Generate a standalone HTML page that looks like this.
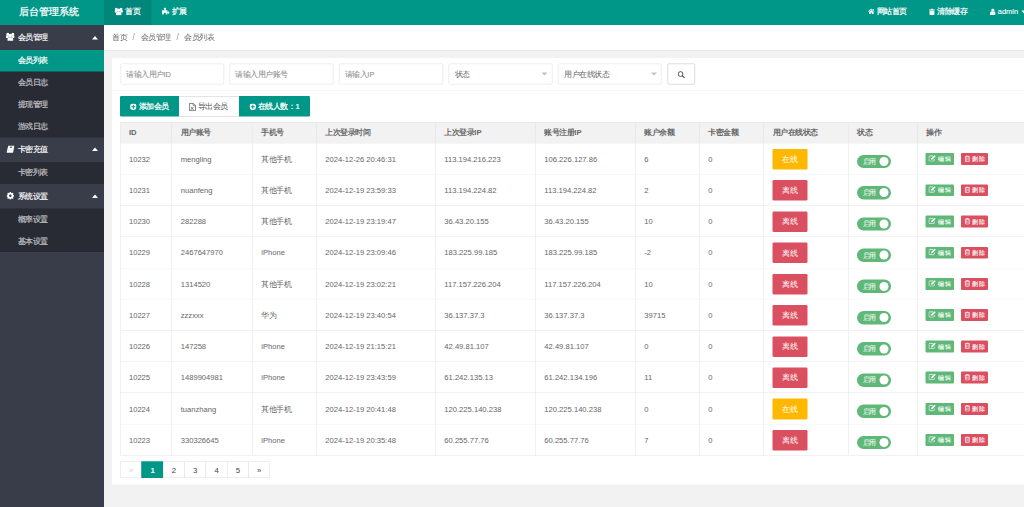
<!DOCTYPE html><html><head><meta charset="utf-8"><title>后台管理系统</title><style>
*{box-sizing:border-box;margin:0;padding:0}
html,body{width:1024px;height:507px;overflow:hidden;background:#f2f2f2}
#root{position:absolute;left:0;top:0;width:2048px;height:1014px;transform:scale(.5);transform-origin:0 0;font-family:"Liberation Sans",sans-serif;font-size:15px;color:#666;overflow:hidden}
.abs{position:absolute}
.ic{display:inline-block;vertical-align:middle;flex:none}
.hd{left:0;top:0;width:2048px;height:50px;background:#009688}
.logo{left:-6.300px;top:.2px;width:208px;height:50px;color:#fff;font-size:19.8px;line-height:44px;text-align:center;white-space:nowrap;-webkit-text-stroke:.5px #fff}
.nav{top:0;height:50px;color:#fff;font-size:15.4px;line-height:46px;white-space:nowrap;display:flex;align-items:center}
.nav span{display:inline-block;line-height:46px;height:50px}
.side{left:0;top:50px;width:208px;height:964px;background:#393D49}
.grp{left:0;width:208px;height:49.8px;color:#fff;font-size:15.2px;line-height:49px;white-space:nowrap}
.sub{left:0;width:208px;height:44.3px;background:#282B33;color:rgba(255,255,255,.7);font-size:15.2px;line-height:42.5px;padding-left:35.4px;white-space:nowrap}
.sub.on{background:#009688;color:#fff}
.caret{position:absolute;left:184.200px;top:21.600px;width:0;height:0;border-left:6.600px solid transparent;border-right:6.600px solid transparent;border-bottom:7.600px solid #fff}
.bc{left:208px;top:50px;width:1840px;height:51.600px;background:#fff;border-bottom:2px solid #e8e8e8;font-size:15.2px;color:#666;line-height:48.400px;white-space:nowrap}
.card{left:223.800px;top:115.600px;width:1900px;height:853.400px;background:#fff;border-radius:3px}
.inp{top:126.500px;height:42px;width:207.600px;border:1px solid #dcdcdc;border-radius:3px;background:#fff;font-size:14.6px;line-height:39px;padding-left:12px;color:#999;white-space:nowrap}
.inp.sel{color:#666}
.inp.sel:after{content:"";position:absolute;right:8.400px;top:17.500px;border-left:6px solid transparent;border-right:6px solid transparent;border-top:6.500px solid #c2c2c2}
.btn{background:#009688}
.th,.td{position:absolute;border-right:1px solid #e2e2e2;border-bottom:1px solid #e2e2e2;padding-left:17px;white-space:nowrap;overflow:hidden}
.th{background:#f2f2f2;font-weight:bold;color:#666;font-size:14.8px;line-height:40px;height:42.500px;border-top:1px solid #e2e2e2}
.td{background:#fff;font-size:15px;line-height:61px;height:62.450px;color:#666}
.st{width:70.200px;height:41.200px;border-radius:2.500px}
.sw{width:68px;height:26.800px;border-radius:14px;background:#5FB878}
.sw:after{content:"";position:absolute;right:5.400px;top:4.400px;width:18px;height:18px;border-radius:50%;background:#fff}
.xb{height:23.800px;border-radius:2.200px}
.pg{position:absolute;top:923px;height:33px;width:43.660px;border:1px solid #dedede;background:#fff;color:#444;font-size:15.6px;line-height:31px;text-align:center;margin-left:0}
</style></head><body><div id="root">
<div class="abs hd"></div>
<div class="abs logo">后台管理系统</div>
<div class="abs" style="left:208px;top:0;width:95px;height:50px;background:rgba(0,0,0,.1)"></div>
<span class="abs" style="left:229.4px;top:15px;line-height:0;display:block"><svg class="ic" width="16.8" height="15.6" viewBox="0 0 17 16" ><g fill="#fff"><circle cx="3.5" cy="3" r="2.700"/><circle cx="13.500" cy="3" r="2.700"/><circle cx="8.500" cy="5.400" r="3.500"/><path d="M0 10V7.800c0-1.500 1-2.500 2.500-2.500h3v4.200c-.9.200-1.600.5-2.200 1H.8C.3 10.500 0 10.300 0 10z"/><path d="M17 10V7.800c0-1.500-1-2.500-2.500-2.500h-3v4.200c.9.200 1.600.5 2.200 1h2.500c.5 0 .8-.2.800-.5z"/><path d="M2.800 14.200c0-3.300 1.500-5.400 3.800-5.400h3.800c2.300 0 3.800 2.100 3.800 5.400 0 1.100-.8 1.800-1.900 1.800H4.700c-1.100 0-1.900-.7-1.900-1.800z"/></g></svg></span>
<span class="abs" style="left:250.8px;top:11.00px;height:24px;line-height:24px;font-size:15.3px;color:#fff;white-space:nowrap;-webkit-text-stroke:0.45px #fff;">首页</span>
<span class="abs" style="left:323.8px;top:15px;line-height:0;display:block"><svg class="ic" width="15.6" height="14.4" viewBox="0 0 16 15" ><g fill="#fff"><circle cx="6" cy="2.400" r="2.400"/><rect x="4.800" y="3" width="2.400" height="3"/><path d="M0 5.500h11.200V15H8v-2.200c0-1.200-.9-2-2.200-2s-2.200.8-2.200 2V15H0z"/><rect x="11" y="9.300" width="3" height="2.400"/><circle cx="13.600" cy="10.500" r="2.300"/></g></svg></span>
<span class="abs" style="left:343.2px;top:11.00px;height:24px;line-height:24px;font-size:15.3px;color:#fff;white-space:nowrap;-webkit-text-stroke:0.45px #fff;">扩展</span>
<span class="abs" style="left:1735.8px;top:17.4px;line-height:0;display:block"><svg class="ic" width="13.2" height="11" viewBox="0 0 16 13" ><g fill="#fff"><path d="M8 0l8 6.800-1 1.200L8 2.200 1 8 0 6.800z"/><path d="M8 3.400l5.600 4.700V13H9.200V9.800H6.800V13H2.400V8.100z"/><path d="M11.600.8h2.200v3.400l-2.200-1.900z"/></g></svg></span>
<span class="abs" style="left:1753.8px;top:11.00px;height:24px;line-height:24px;font-size:15.3px;color:#fff;white-space:nowrap;-webkit-text-stroke:0.45px #fff;">网站首页</span>
<span class="abs" style="left:1858.4px;top:16.6px;line-height:0;display:block"><svg class="ic" width="11.8" height="13.2" viewBox="0 0 12 13.500" ><g fill="#fff"><path d="M0 1.800h3.600L4.400 0h3.200l.8 1.800H12v1.700H0z"/><path d="M1 4.300h10v7.800c0 .8-.6 1.400-1.400 1.400H2.400c-.8 0-1.400-.6-1.400-1.400z"/></g></svg></span>
<span class="abs" style="left:1874.8px;top:11.00px;height:24px;line-height:24px;font-size:15.3px;color:#fff;white-space:nowrap;-webkit-text-stroke:0.45px #fff;">清除缓存</span>
<span class="abs" style="left:1979.8px;top:16.6px;line-height:0;display:block"><svg class="ic" width="11.4" height="13" viewBox="0 0 12 13.600" ><g fill="#fff"><circle cx="6" cy="3.300" r="3.300"/><path d="M0 11.400c0-3.400 1.500-5.400 3.600-5.400.7.500 1.500.8 2.400.8s1.700-.3 2.400-.8c2.100 0 3.600 2 3.600 5.400 0 1.300-.8 2.200-2.200 2.200H2.200C.8 13.600 0 12.700 0 11.400z"/></g></svg></span>
<span class="abs" style="left:1995.5px;top:11.00px;height:24px;line-height:24px;font-size:14.95px;color:#fff;white-space:nowrap;-webkit-text-stroke:0.2px #fff;">admin</span>
<i class="abs" style="left:2043.400px;top:21.200px;border-left:5px solid transparent;border-right:5px solid transparent;border-top:6px solid #fff"></i>
<div class="abs side"></div>
<div class="abs grp" style="top:50.0px"><i class="caret"></i></div>
<span class="abs" style="left:11.8px;top:65.4px;line-height:0;display:block"><svg class="ic" width="17.4" height="17" viewBox="0 0 17 16" ><g fill="#fff"><circle cx="3.5" cy="3" r="2.700"/><circle cx="13.500" cy="3" r="2.700"/><circle cx="8.500" cy="5.400" r="3.500"/><path d="M0 10V7.800c0-1.500 1-2.500 2.500-2.500h3v4.200c-.9.200-1.600.5-2.200 1H.8C.3 10.500 0 10.300 0 10z"/><path d="M17 10V7.800c0-1.500-1-2.500-2.500-2.500h-3v4.200c.9.200 1.600.5 2.200 1h2.500c.5 0 .8-.2.800-.5z"/><path d="M2.800 14.200c0-3.300 1.500-5.400 3.800-5.400h3.800c2.300 0 3.800 2.100 3.800 5.400 0 1.100-.8 1.800-1.900 1.800H4.700c-1.100 0-1.900-.7-1.900-1.800z"/></g></svg></span>
<span class="abs" style="left:35.4px;top:63.00px;height:24px;line-height:24px;font-size:15.3px;color:#fff;white-space:nowrap;-webkit-text-stroke:0.3px #fff;">会员管理</span>
<div class="abs sub on" style="top:99.8px"></div>
<span class="abs" style="left:35.3px;top:109.40px;height:24px;line-height:24px;font-size:15.3px;color:#fff;white-space:nowrap;-webkit-text-stroke:0.4px #fff;">会员列表</span>
<div class="abs sub" style="top:143.3px"></div>
<span class="abs" style="left:35.3px;top:152.90px;height:24px;line-height:24px;font-size:15.3px;color:#bfbfc2;white-space:nowrap;-webkit-text-stroke:0.4px #bfbfc2;">会员日志</span>
<div class="abs sub" style="top:186.8px"></div>
<span class="abs" style="left:35.3px;top:196.40px;height:24px;line-height:24px;font-size:15.3px;color:#bfbfc2;white-space:nowrap;-webkit-text-stroke:0.4px #bfbfc2;">提现管理</span>
<div class="abs sub" style="top:230.3px"></div>
<span class="abs" style="left:35.3px;top:239.90px;height:24px;line-height:24px;font-size:15.3px;color:#bfbfc2;white-space:nowrap;-webkit-text-stroke:0.4px #bfbfc2;">游戏日志</span>
<div class="abs grp" style="top:273.8px"><i class="caret"></i></div>
<span class="abs" style="left:12.8px;top:291.2px;line-height:0;display:block"><svg class="ic" width="16" height="14.6" viewBox="0 0 16 14.600" ><path d="M3.600 0H16l-3 14.600H0z" fill="#fff"/><path d="M7 2h4.800l-.7 3.200H6.300z" fill="#7b8090"/><path d="M1.700 9.400h12.300" stroke="#c9ccd4" stroke-width=".9"/></svg></span>
<span class="abs" style="left:35.4px;top:286.80px;height:24px;line-height:24px;font-size:15.3px;color:#fff;white-space:nowrap;-webkit-text-stroke:0.3px #fff;">卡密充值</span>
<div class="abs sub" style="top:323.6px"></div>
<span class="abs" style="left:35.3px;top:333.20px;height:24px;line-height:24px;font-size:15.3px;color:#bfbfc2;white-space:nowrap;-webkit-text-stroke:0.4px #bfbfc2;">卡密列表</span>
<div class="abs grp" style="top:367.1px"><i class="caret"></i></div>
<span class="abs" style="left:13.2px;top:383.8px;line-height:0;display:block"><svg class="ic" width="15.4" height="15.4" viewBox="0 0 16 16" ><g fill="#fff"><rect x="6.500" y="0" width="3" height="16" rx=".6" transform="rotate(0 8 8)"/><rect x="6.500" y="0" width="3" height="16" rx=".6" transform="rotate(45 8 8)"/><rect x="6.500" y="0" width="3" height="16" rx=".6" transform="rotate(90 8 8)"/><rect x="6.500" y="0" width="3" height="16" rx=".6" transform="rotate(135 8 8)"/><circle cx="8" cy="8" r="6.200"/></g><circle cx="8" cy="8" r="2.600" fill="#393D49"/></svg></span>
<span class="abs" style="left:35.4px;top:380.10px;height:24px;line-height:24px;font-size:15.3px;color:#fff;white-space:nowrap;-webkit-text-stroke:0.3px #fff;">系统设置</span>
<div class="abs sub" style="top:416.9px"></div>
<span class="abs" style="left:35.3px;top:426.50px;height:24px;line-height:24px;font-size:15.3px;color:#bfbfc2;white-space:nowrap;-webkit-text-stroke:0.4px #bfbfc2;">概率设置</span>
<div class="abs sub" style="top:460.4px"></div>
<span class="abs" style="left:35.3px;top:470.00px;height:24px;line-height:24px;font-size:15.3px;color:#bfbfc2;white-space:nowrap;-webkit-text-stroke:0.4px #bfbfc2;">基本设置</span>
<div class="abs" style="left:0;top:503.9px;width:208px;height:20px;background:#393D49"></div>
<div class="abs bc"></div>
<span class="abs" style="left:224.4px;top:62.40px;height:24px;line-height:24px;font-size:15.2px;color:#666;white-space:nowrap;">首页</span>
<span class="abs" style="left:265px;top:61.80px;height:24px;line-height:24px;font-size:17px;color:#999;white-space:nowrap;">/</span>
<span class="abs" style="left:281.4px;top:62.40px;height:24px;line-height:24px;font-size:15.2px;color:#666;white-space:nowrap;">会员管理</span>
<span class="abs" style="left:353px;top:61.80px;height:24px;line-height:24px;font-size:17px;color:#999;white-space:nowrap;">/</span>
<span class="abs" style="left:368.6px;top:62.40px;height:24px;line-height:24px;font-size:15.2px;color:#666;white-space:nowrap;">会员列表</span>
<div class="abs card"></div>
<div class="abs inp" style="left:240.6px"></div>
<span class="abs" style="left:252.0px;top:136.10px;height:24px;line-height:24px;font-size:15.2px;color:#858585;white-space:nowrap;">请输入用户ID</span>
<div class="abs inp" style="left:459.4px"></div>
<span class="abs" style="left:470.79999999999995px;top:136.10px;height:24px;line-height:24px;font-size:15.2px;color:#858585;white-space:nowrap;">请输入用户账号</span>
<div class="abs inp" style="left:678.2px"></div>
<span class="abs" style="left:689.6px;top:136.10px;height:24px;line-height:24px;font-size:15.2px;color:#858585;white-space:nowrap;">请输入IP</span>
<div class="abs inp sel" style="left:897px"></div>
<span class="abs" style="left:909.2px;top:136.10px;height:24px;line-height:24px;font-size:15.2px;color:#666;white-space:nowrap;">状态</span>
<div class="abs inp sel" style="left:1115.8px"></div>
<span class="abs" style="left:1128.0px;top:136.10px;height:24px;line-height:24px;font-size:15.2px;color:#666;white-space:nowrap;">用户在线状态</span>
<div class="abs" style="left:1334.500px;top:126.500px;width:55.900px;height:42px;border:1px solid #bdbdbd;border-radius:2.500px;background:#fff"></div>
<span class="abs" style="left:1355.2px;top:141.8px;line-height:0;display:block"><svg class="ic" width="15.2" height="14.6" viewBox="0 0 16 15.400" ><circle cx="6.400" cy="6.400" r="5.100" fill="none" stroke="#444" stroke-width="1.900"/><path d="M10.400 10.400l4.300 4" stroke="#444" stroke-width="2.300" stroke-linecap="round"/></svg></span>
<div class="abs" style="left:223.800px;top:180px;width:1900px;height:1px;background:#eee"></div>
<div class="abs btn" style="left:240.200px;top:191.8px;height:41.2px;width:118px;border-radius:2.500px 0 0 2.500px"></div>
<span class="abs" style="left:260px;top:206.6px;line-height:0;display:block"><svg class="ic" width="13.2" height="13.2" viewBox="0 0 14 14" ><circle cx="7" cy="7" r="7" fill="#fff"/><path d="M5.900 2.800h2.200v3.100h3.100v2.200H8.100v3.100H5.900V8.100H2.800V5.900h3.100z" fill="#009688"/></svg></span>
<span class="abs" style="left:277.5px;top:201.30px;height:24px;line-height:24px;font-size:15.4px;color:#fff;white-space:nowrap;-webkit-text-stroke:0.45px #fff;">添加会员</span>
<div class="abs btn" style="left:358.200px;top:191.8px;height:41.2px;width:120.200px;background:#fff;border-top:1px solid #c9c9c9;border-bottom:1px solid #c9c9c9"></div>
<span class="abs" style="left:378.2px;top:205.5px;line-height:0;display:block"><svg class="ic" width="13.8" height="16.2" viewBox="0 0 12 14" ><path d="M.7.700h6.600l4 4v8.600H.7z" fill="none" stroke="#555" stroke-width="1.300"/><path d="M7.300.7v4h4" fill="none" stroke="#555" stroke-width="1.100"/><path d="M3.400 6.800l4.200 5M7.600 6.800l-4.200 5" stroke="#555" stroke-width="1.300"/></svg></span>
<span class="abs" style="left:395.8px;top:201.30px;height:24px;line-height:24px;font-size:15.4px;color:#555;white-space:nowrap;">导出会员</span>
<div class="abs btn" style="left:478.400px;top:191.8px;height:41.2px;width:141.400px;border-radius:0 2.500px 2.500px 0"></div>
<span class="abs" style="left:498.6px;top:206.6px;line-height:0;display:block"><svg class="ic" width="13.2" height="13.2" viewBox="0 0 14 14" ><circle cx="7" cy="7" r="7" fill="#fff"/><path d="M5.900 2.800h2.200v3.100h3.100v2.200H8.100v3.100H5.900V8.100H2.800V5.900h3.100z" fill="#009688"/></svg></span>
<span class="abs" style="left:515.8px;top:201.30px;height:24px;line-height:24px;font-size:15.4px;color:#fff;white-space:nowrap;-webkit-text-stroke:0.45px #fff;">在线人数：1</span>
<div class="th" style="left:240.7px;top:244.3px;width:103.6px;border-left:1px solid #e2e2e2;"></div>
<span class="abs" style="left:257.9px;top:253.10px;height:24px;line-height:24px;font-size:15.3px;color:#666;white-space:nowrap;font-weight:bold;">ID</span>
<div class="th" style="left:344.3px;top:244.3px;width:161.2px;"></div>
<span class="abs" style="left:361.5px;top:253.10px;height:24px;line-height:24px;font-size:15.3px;color:#666;white-space:nowrap;font-weight:bold;">用户账号</span>
<div class="th" style="left:505.5px;top:244.3px;width:128.0px;"></div>
<span class="abs" style="left:522.7px;top:253.10px;height:24px;line-height:24px;font-size:15.3px;color:#666;white-space:nowrap;font-weight:bold;">手机号</span>
<div class="th" style="left:633.5px;top:244.3px;width:238.0px;"></div>
<span class="abs" style="left:650.7px;top:253.10px;height:24px;line-height:24px;font-size:15.3px;color:#666;white-space:nowrap;font-weight:bold;">上次登录时间</span>
<div class="th" style="left:871.5px;top:244.3px;width:200.0px;"></div>
<span class="abs" style="left:888.7px;top:253.10px;height:24px;line-height:24px;font-size:15.3px;color:#666;white-space:nowrap;font-weight:bold;">上次登录IP</span>
<div class="th" style="left:1071.5px;top:244.3px;width:200.0px;"></div>
<span class="abs" style="left:1088.7px;top:253.10px;height:24px;line-height:24px;font-size:15.3px;color:#666;white-space:nowrap;font-weight:bold;">账号注册IP</span>
<div class="th" style="left:1271.5px;top:244.3px;width:128.0px;"></div>
<span class="abs" style="left:1288.7px;top:253.10px;height:24px;line-height:24px;font-size:15.3px;color:#666;white-space:nowrap;font-weight:bold;">账户余额</span>
<div class="th" style="left:1399.5px;top:244.3px;width:128.6px;"></div>
<span class="abs" style="left:1416.7px;top:253.10px;height:24px;line-height:24px;font-size:15.3px;color:#666;white-space:nowrap;font-weight:bold;">卡密金额</span>
<div class="th" style="left:1528.1px;top:244.3px;width:169.4px;"></div>
<span class="abs" style="left:1545.3px;top:253.10px;height:24px;line-height:24px;font-size:15.3px;color:#666;white-space:nowrap;font-weight:bold;">用户在线状态</span>
<div class="th" style="left:1697.5px;top:244.3px;width:138.0px;"></div>
<span class="abs" style="left:1714.7px;top:253.10px;height:24px;line-height:24px;font-size:15.3px;color:#666;white-space:nowrap;font-weight:bold;">状态</span>
<div class="th" style="left:1835.5px;top:244.3px;width:264.5px;"></div>
<span class="abs" style="left:1852.7px;top:253.10px;height:24px;line-height:24px;font-size:15.3px;color:#666;white-space:nowrap;font-weight:bold;">操作</span>
<div class="td" style="left:240.7px;top:286.80px;width:103.6px;border-left:1px solid #e2e2e2;"></div>
<span class="abs" style="left:257.9px;top:306.00px;height:24px;line-height:24px;font-size:15.2px;color:#666;white-space:nowrap;">10232</span>
<div class="td" style="left:344.3px;top:286.80px;width:161.2px;"></div>
<span class="abs" style="left:361.5px;top:306.00px;height:24px;line-height:24px;font-size:15.2px;color:#666;white-space:nowrap;">mengling</span>
<div class="td" style="left:505.5px;top:286.80px;width:128.0px;"></div>
<span class="abs" style="left:522.7px;top:306.00px;height:24px;line-height:24px;font-size:15.2px;color:#666;white-space:nowrap;">其他手机</span>
<div class="td" style="left:633.5px;top:286.80px;width:238.0px;"></div>
<span class="abs" style="left:650.7px;top:306.00px;height:24px;line-height:24px;font-size:15.2px;color:#666;white-space:nowrap;">2024-12-26 20:46:31</span>
<div class="td" style="left:871.5px;top:286.80px;width:200.0px;"></div>
<span class="abs" style="left:888.7px;top:306.00px;height:24px;line-height:24px;font-size:15.2px;color:#666;white-space:nowrap;">113.194.216.223</span>
<div class="td" style="left:1071.5px;top:286.80px;width:200.0px;"></div>
<span class="abs" style="left:1088.7px;top:306.00px;height:24px;line-height:24px;font-size:15.2px;color:#666;white-space:nowrap;">106.226.127.86</span>
<div class="td" style="left:1271.5px;top:286.80px;width:128.0px;"></div>
<span class="abs" style="left:1288.7px;top:306.00px;height:24px;line-height:24px;font-size:15.2px;color:#666;white-space:nowrap;">6</span>
<div class="td" style="left:1399.5px;top:286.80px;width:128.6px;"></div>
<span class="abs" style="left:1416.7px;top:306.00px;height:24px;line-height:24px;font-size:15.2px;color:#666;white-space:nowrap;">0</span>
<div class="td" style="left:1528.1px;top:286.80px;width:169.4px;"></div>
<div class="abs st" style="left:1544.5px;top:297.80px;background:#FFB800"></div>
<span class="abs" style="left:1564.5px;top:306.20px;height:24px;line-height:24px;font-size:15.2px;color:#fff;white-space:nowrap;">在线</span>
<div class="td" style="left:1697.5px;top:286.80px;width:138.0px;"></div>
<div class="abs sw" style="left:1714.3px;top:309.60px"></div>
<span class="abs" style="left:1725.7px;top:311.20px;height:24px;line-height:24px;font-size:13px;color:#fff;white-space:nowrap;">启用</span>
<div class="td" style="left:1835.5px;top:286.80px;width:264.5px;"></div>
<div class="abs xb" style="left:1851.0px;top:306.20px;width:57px;background:#5FB878"></div>
<span class="abs" style="left:1856.8px;top:309.8px;line-height:0;display:block"><svg class="ic" width="15.2" height="13.4" viewBox="0 0 15.400 13.600" ><path d="M9.600 1.800H2.600C1.700 1.800.9 2.500.9 3.400v7.600c0 .9.800 1.600 1.700 1.600h7.600c.9 0 1.600-.7 1.600-1.600V8.200" fill="none" stroke="#fff" stroke-width="1.500"/><path d="M5.300 9.500l.5-2.700L12.400.300l2.300 2.300L8.100 9z" fill="#fff"/></svg></span>
<span class="abs" style="left:1876.8px;top:305.80px;height:24px;line-height:24px;font-size:12.9px;color:#fff;white-space:nowrap;-webkit-text-stroke:0.2px #fff;">编辑</span>
<div class="abs xb" style="left:1922.0px;top:306.20px;width:53.600px;background:#DB5060"></div>
<span class="abs" style="left:1929.0px;top:310.59999999999997px;line-height:0;display:block"><svg class="ic" width="11.2" height="13.2" viewBox="0 0 10 13" ><g fill="none" stroke="#fff" stroke-width="1.500"><path d="M0 2.500h10M3.200 2.300V.800h3.600v1.500"/><path d="M1.300 3v8.200c0 .6.400 1 1 1h5.400c.6 0 1-.4 1-1V3"/><path d="M3.700 5v5M6.300 5v5" stroke-width="1.100"/></g></svg></span>
<span class="abs" style="left:1944.0px;top:305.80px;height:24px;line-height:24px;font-size:12.9px;color:#fff;white-space:nowrap;-webkit-text-stroke:0.2px #fff;">删除</span>
<div class="td" style="left:240.7px;top:349.25px;width:103.6px;border-left:1px solid #e2e2e2;"></div>
<span class="abs" style="left:257.9px;top:368.45px;height:24px;line-height:24px;font-size:15.2px;color:#666;white-space:nowrap;">10231</span>
<div class="td" style="left:344.3px;top:349.25px;width:161.2px;"></div>
<span class="abs" style="left:361.5px;top:368.45px;height:24px;line-height:24px;font-size:15.2px;color:#666;white-space:nowrap;">nuanfeng</span>
<div class="td" style="left:505.5px;top:349.25px;width:128.0px;"></div>
<span class="abs" style="left:522.7px;top:368.45px;height:24px;line-height:24px;font-size:15.2px;color:#666;white-space:nowrap;">其他手机</span>
<div class="td" style="left:633.5px;top:349.25px;width:238.0px;"></div>
<span class="abs" style="left:650.7px;top:368.45px;height:24px;line-height:24px;font-size:15.2px;color:#666;white-space:nowrap;">2024-12-19 23:59:33</span>
<div class="td" style="left:871.5px;top:349.25px;width:200.0px;"></div>
<span class="abs" style="left:888.7px;top:368.45px;height:24px;line-height:24px;font-size:15.2px;color:#666;white-space:nowrap;">113.194.224.82</span>
<div class="td" style="left:1071.5px;top:349.25px;width:200.0px;"></div>
<span class="abs" style="left:1088.7px;top:368.45px;height:24px;line-height:24px;font-size:15.2px;color:#666;white-space:nowrap;">113.194.224.82</span>
<div class="td" style="left:1271.5px;top:349.25px;width:128.0px;"></div>
<span class="abs" style="left:1288.7px;top:368.45px;height:24px;line-height:24px;font-size:15.2px;color:#666;white-space:nowrap;">2</span>
<div class="td" style="left:1399.5px;top:349.25px;width:128.6px;"></div>
<span class="abs" style="left:1416.7px;top:368.45px;height:24px;line-height:24px;font-size:15.2px;color:#666;white-space:nowrap;">0</span>
<div class="td" style="left:1528.1px;top:349.25px;width:169.4px;"></div>
<div class="abs st" style="left:1544.5px;top:360.25px;background:#DB5060"></div>
<span class="abs" style="left:1564.5px;top:368.65px;height:24px;line-height:24px;font-size:15.2px;color:#fff;white-space:nowrap;">离线</span>
<div class="td" style="left:1697.5px;top:349.25px;width:138.0px;"></div>
<div class="abs sw" style="left:1714.3px;top:372.05px"></div>
<span class="abs" style="left:1725.7px;top:373.65px;height:24px;line-height:24px;font-size:13px;color:#fff;white-space:nowrap;">启用</span>
<div class="td" style="left:1835.5px;top:349.25px;width:264.5px;"></div>
<div class="abs xb" style="left:1851.0px;top:368.65px;width:57px;background:#5FB878"></div>
<span class="abs" style="left:1856.8px;top:372.25px;line-height:0;display:block"><svg class="ic" width="15.2" height="13.4" viewBox="0 0 15.400 13.600" ><path d="M9.600 1.800H2.600C1.700 1.800.9 2.500.9 3.400v7.600c0 .9.800 1.600 1.700 1.600h7.600c.9 0 1.600-.7 1.600-1.600V8.200" fill="none" stroke="#fff" stroke-width="1.500"/><path d="M5.300 9.500l.5-2.700L12.400.300l2.300 2.300L8.100 9z" fill="#fff"/></svg></span>
<span class="abs" style="left:1876.8px;top:368.25px;height:24px;line-height:24px;font-size:12.9px;color:#fff;white-space:nowrap;-webkit-text-stroke:0.2px #fff;">编辑</span>
<div class="abs xb" style="left:1922.0px;top:368.65px;width:53.600px;background:#DB5060"></div>
<span class="abs" style="left:1929.0px;top:373.04999999999995px;line-height:0;display:block"><svg class="ic" width="11.2" height="13.2" viewBox="0 0 10 13" ><g fill="none" stroke="#fff" stroke-width="1.500"><path d="M0 2.500h10M3.200 2.300V.800h3.600v1.500"/><path d="M1.300 3v8.200c0 .6.400 1 1 1h5.400c.6 0 1-.4 1-1V3"/><path d="M3.700 5v5M6.300 5v5" stroke-width="1.100"/></g></svg></span>
<span class="abs" style="left:1944.0px;top:368.25px;height:24px;line-height:24px;font-size:12.9px;color:#fff;white-space:nowrap;-webkit-text-stroke:0.2px #fff;">删除</span>
<div class="td" style="left:240.7px;top:411.70px;width:103.6px;border-left:1px solid #e2e2e2;"></div>
<span class="abs" style="left:257.9px;top:430.90px;height:24px;line-height:24px;font-size:15.2px;color:#666;white-space:nowrap;">10230</span>
<div class="td" style="left:344.3px;top:411.70px;width:161.2px;"></div>
<span class="abs" style="left:361.5px;top:430.90px;height:24px;line-height:24px;font-size:15.2px;color:#666;white-space:nowrap;">282288</span>
<div class="td" style="left:505.5px;top:411.70px;width:128.0px;"></div>
<span class="abs" style="left:522.7px;top:430.90px;height:24px;line-height:24px;font-size:15.2px;color:#666;white-space:nowrap;">其他手机</span>
<div class="td" style="left:633.5px;top:411.70px;width:238.0px;"></div>
<span class="abs" style="left:650.7px;top:430.90px;height:24px;line-height:24px;font-size:15.2px;color:#666;white-space:nowrap;">2024-12-19 23:19:47</span>
<div class="td" style="left:871.5px;top:411.70px;width:200.0px;"></div>
<span class="abs" style="left:888.7px;top:430.90px;height:24px;line-height:24px;font-size:15.2px;color:#666;white-space:nowrap;">36.43.20.155</span>
<div class="td" style="left:1071.5px;top:411.70px;width:200.0px;"></div>
<span class="abs" style="left:1088.7px;top:430.90px;height:24px;line-height:24px;font-size:15.2px;color:#666;white-space:nowrap;">36.43.20.155</span>
<div class="td" style="left:1271.5px;top:411.70px;width:128.0px;"></div>
<span class="abs" style="left:1288.7px;top:430.90px;height:24px;line-height:24px;font-size:15.2px;color:#666;white-space:nowrap;">10</span>
<div class="td" style="left:1399.5px;top:411.70px;width:128.6px;"></div>
<span class="abs" style="left:1416.7px;top:430.90px;height:24px;line-height:24px;font-size:15.2px;color:#666;white-space:nowrap;">0</span>
<div class="td" style="left:1528.1px;top:411.70px;width:169.4px;"></div>
<div class="abs st" style="left:1544.5px;top:422.70px;background:#DB5060"></div>
<span class="abs" style="left:1564.5px;top:431.10px;height:24px;line-height:24px;font-size:15.2px;color:#fff;white-space:nowrap;">离线</span>
<div class="td" style="left:1697.5px;top:411.70px;width:138.0px;"></div>
<div class="abs sw" style="left:1714.3px;top:434.50px"></div>
<span class="abs" style="left:1725.7px;top:436.10px;height:24px;line-height:24px;font-size:13px;color:#fff;white-space:nowrap;">启用</span>
<div class="td" style="left:1835.5px;top:411.70px;width:264.5px;"></div>
<div class="abs xb" style="left:1851.0px;top:431.10px;width:57px;background:#5FB878"></div>
<span class="abs" style="left:1856.8px;top:434.70000000000005px;line-height:0;display:block"><svg class="ic" width="15.2" height="13.4" viewBox="0 0 15.400 13.600" ><path d="M9.600 1.800H2.600C1.700 1.800.9 2.500.9 3.400v7.600c0 .9.800 1.600 1.700 1.600h7.600c.9 0 1.600-.7 1.600-1.600V8.200" fill="none" stroke="#fff" stroke-width="1.500"/><path d="M5.300 9.500l.5-2.700L12.400.300l2.300 2.300L8.100 9z" fill="#fff"/></svg></span>
<span class="abs" style="left:1876.8px;top:430.70px;height:24px;line-height:24px;font-size:12.9px;color:#fff;white-space:nowrap;-webkit-text-stroke:0.2px #fff;">编辑</span>
<div class="abs xb" style="left:1922.0px;top:431.10px;width:53.600px;background:#DB5060"></div>
<span class="abs" style="left:1929.0px;top:435.5px;line-height:0;display:block"><svg class="ic" width="11.2" height="13.2" viewBox="0 0 10 13" ><g fill="none" stroke="#fff" stroke-width="1.500"><path d="M0 2.500h10M3.200 2.300V.800h3.600v1.500"/><path d="M1.300 3v8.200c0 .6.400 1 1 1h5.400c.6 0 1-.4 1-1V3"/><path d="M3.700 5v5M6.300 5v5" stroke-width="1.100"/></g></svg></span>
<span class="abs" style="left:1944.0px;top:430.70px;height:24px;line-height:24px;font-size:12.9px;color:#fff;white-space:nowrap;-webkit-text-stroke:0.2px #fff;">删除</span>
<div class="td" style="left:240.7px;top:474.15px;width:103.6px;border-left:1px solid #e2e2e2;"></div>
<span class="abs" style="left:257.9px;top:493.35px;height:24px;line-height:24px;font-size:15.2px;color:#666;white-space:nowrap;">10229</span>
<div class="td" style="left:344.3px;top:474.15px;width:161.2px;"></div>
<span class="abs" style="left:361.5px;top:493.35px;height:24px;line-height:24px;font-size:15.2px;color:#666;white-space:nowrap;">2467647970</span>
<div class="td" style="left:505.5px;top:474.15px;width:128.0px;"></div>
<span class="abs" style="left:522.7px;top:493.35px;height:24px;line-height:24px;font-size:15.2px;color:#666;white-space:nowrap;">iPhone</span>
<div class="td" style="left:633.5px;top:474.15px;width:238.0px;"></div>
<span class="abs" style="left:650.7px;top:493.35px;height:24px;line-height:24px;font-size:15.2px;color:#666;white-space:nowrap;">2024-12-19 23:09:46</span>
<div class="td" style="left:871.5px;top:474.15px;width:200.0px;"></div>
<span class="abs" style="left:888.7px;top:493.35px;height:24px;line-height:24px;font-size:15.2px;color:#666;white-space:nowrap;">183.225.99.185</span>
<div class="td" style="left:1071.5px;top:474.15px;width:200.0px;"></div>
<span class="abs" style="left:1088.7px;top:493.35px;height:24px;line-height:24px;font-size:15.2px;color:#666;white-space:nowrap;">183.225.99.185</span>
<div class="td" style="left:1271.5px;top:474.15px;width:128.0px;"></div>
<span class="abs" style="left:1288.7px;top:493.35px;height:24px;line-height:24px;font-size:15.2px;color:#666;white-space:nowrap;">-2</span>
<div class="td" style="left:1399.5px;top:474.15px;width:128.6px;"></div>
<span class="abs" style="left:1416.7px;top:493.35px;height:24px;line-height:24px;font-size:15.2px;color:#666;white-space:nowrap;">0</span>
<div class="td" style="left:1528.1px;top:474.15px;width:169.4px;"></div>
<div class="abs st" style="left:1544.5px;top:485.15px;background:#DB5060"></div>
<span class="abs" style="left:1564.5px;top:493.55px;height:24px;line-height:24px;font-size:15.2px;color:#fff;white-space:nowrap;">离线</span>
<div class="td" style="left:1697.5px;top:474.15px;width:138.0px;"></div>
<div class="abs sw" style="left:1714.3px;top:496.95px"></div>
<span class="abs" style="left:1725.7px;top:498.55px;height:24px;line-height:24px;font-size:13px;color:#fff;white-space:nowrap;">启用</span>
<div class="td" style="left:1835.5px;top:474.15px;width:264.5px;"></div>
<div class="abs xb" style="left:1851.0px;top:493.55px;width:57px;background:#5FB878"></div>
<span class="abs" style="left:1856.8px;top:497.15000000000003px;line-height:0;display:block"><svg class="ic" width="15.2" height="13.4" viewBox="0 0 15.400 13.600" ><path d="M9.600 1.800H2.600C1.700 1.800.9 2.500.9 3.400v7.600c0 .9.800 1.600 1.700 1.600h7.600c.9 0 1.600-.7 1.600-1.600V8.200" fill="none" stroke="#fff" stroke-width="1.500"/><path d="M5.300 9.500l.5-2.700L12.400.300l2.300 2.300L8.100 9z" fill="#fff"/></svg></span>
<span class="abs" style="left:1876.8px;top:493.15px;height:24px;line-height:24px;font-size:12.9px;color:#fff;white-space:nowrap;-webkit-text-stroke:0.2px #fff;">编辑</span>
<div class="abs xb" style="left:1922.0px;top:493.55px;width:53.600px;background:#DB5060"></div>
<span class="abs" style="left:1929.0px;top:497.95px;line-height:0;display:block"><svg class="ic" width="11.2" height="13.2" viewBox="0 0 10 13" ><g fill="none" stroke="#fff" stroke-width="1.500"><path d="M0 2.500h10M3.200 2.300V.800h3.600v1.500"/><path d="M1.300 3v8.200c0 .6.400 1 1 1h5.400c.6 0 1-.4 1-1V3"/><path d="M3.700 5v5M6.300 5v5" stroke-width="1.100"/></g></svg></span>
<span class="abs" style="left:1944.0px;top:493.15px;height:24px;line-height:24px;font-size:12.9px;color:#fff;white-space:nowrap;-webkit-text-stroke:0.2px #fff;">删除</span>
<div class="td" style="left:240.7px;top:536.60px;width:103.6px;border-left:1px solid #e2e2e2;"></div>
<span class="abs" style="left:257.9px;top:555.80px;height:24px;line-height:24px;font-size:15.2px;color:#666;white-space:nowrap;">10228</span>
<div class="td" style="left:344.3px;top:536.60px;width:161.2px;"></div>
<span class="abs" style="left:361.5px;top:555.80px;height:24px;line-height:24px;font-size:15.2px;color:#666;white-space:nowrap;">1314520</span>
<div class="td" style="left:505.5px;top:536.60px;width:128.0px;"></div>
<span class="abs" style="left:522.7px;top:555.80px;height:24px;line-height:24px;font-size:15.2px;color:#666;white-space:nowrap;">其他手机</span>
<div class="td" style="left:633.5px;top:536.60px;width:238.0px;"></div>
<span class="abs" style="left:650.7px;top:555.80px;height:24px;line-height:24px;font-size:15.2px;color:#666;white-space:nowrap;">2024-12-19 23:02:21</span>
<div class="td" style="left:871.5px;top:536.60px;width:200.0px;"></div>
<span class="abs" style="left:888.7px;top:555.80px;height:24px;line-height:24px;font-size:15.2px;color:#666;white-space:nowrap;">117.157.226.204</span>
<div class="td" style="left:1071.5px;top:536.60px;width:200.0px;"></div>
<span class="abs" style="left:1088.7px;top:555.80px;height:24px;line-height:24px;font-size:15.2px;color:#666;white-space:nowrap;">117.157.226.204</span>
<div class="td" style="left:1271.5px;top:536.60px;width:128.0px;"></div>
<span class="abs" style="left:1288.7px;top:555.80px;height:24px;line-height:24px;font-size:15.2px;color:#666;white-space:nowrap;">10</span>
<div class="td" style="left:1399.5px;top:536.60px;width:128.6px;"></div>
<span class="abs" style="left:1416.7px;top:555.80px;height:24px;line-height:24px;font-size:15.2px;color:#666;white-space:nowrap;">0</span>
<div class="td" style="left:1528.1px;top:536.60px;width:169.4px;"></div>
<div class="abs st" style="left:1544.5px;top:547.60px;background:#DB5060"></div>
<span class="abs" style="left:1564.5px;top:556.00px;height:24px;line-height:24px;font-size:15.2px;color:#fff;white-space:nowrap;">离线</span>
<div class="td" style="left:1697.5px;top:536.60px;width:138.0px;"></div>
<div class="abs sw" style="left:1714.3px;top:559.40px"></div>
<span class="abs" style="left:1725.7px;top:561.00px;height:24px;line-height:24px;font-size:13px;color:#fff;white-space:nowrap;">启用</span>
<div class="td" style="left:1835.5px;top:536.60px;width:264.5px;"></div>
<div class="abs xb" style="left:1851.0px;top:556.00px;width:57px;background:#5FB878"></div>
<span class="abs" style="left:1856.8px;top:559.6px;line-height:0;display:block"><svg class="ic" width="15.2" height="13.4" viewBox="0 0 15.400 13.600" ><path d="M9.600 1.800H2.600C1.700 1.800.9 2.500.9 3.400v7.600c0 .9.800 1.600 1.700 1.600h7.600c.9 0 1.600-.7 1.600-1.600V8.200" fill="none" stroke="#fff" stroke-width="1.500"/><path d="M5.300 9.500l.5-2.700L12.400.300l2.300 2.300L8.100 9z" fill="#fff"/></svg></span>
<span class="abs" style="left:1876.8px;top:555.60px;height:24px;line-height:24px;font-size:12.9px;color:#fff;white-space:nowrap;-webkit-text-stroke:0.2px #fff;">编辑</span>
<div class="abs xb" style="left:1922.0px;top:556.00px;width:53.600px;background:#DB5060"></div>
<span class="abs" style="left:1929.0px;top:560.4px;line-height:0;display:block"><svg class="ic" width="11.2" height="13.2" viewBox="0 0 10 13" ><g fill="none" stroke="#fff" stroke-width="1.500"><path d="M0 2.500h10M3.200 2.300V.800h3.600v1.500"/><path d="M1.300 3v8.200c0 .6.400 1 1 1h5.400c.6 0 1-.4 1-1V3"/><path d="M3.700 5v5M6.300 5v5" stroke-width="1.100"/></g></svg></span>
<span class="abs" style="left:1944.0px;top:555.60px;height:24px;line-height:24px;font-size:12.9px;color:#fff;white-space:nowrap;-webkit-text-stroke:0.2px #fff;">删除</span>
<div class="td" style="left:240.7px;top:599.05px;width:103.6px;border-left:1px solid #e2e2e2;"></div>
<span class="abs" style="left:257.9px;top:618.25px;height:24px;line-height:24px;font-size:15.2px;color:#666;white-space:nowrap;">10227</span>
<div class="td" style="left:344.3px;top:599.05px;width:161.2px;"></div>
<span class="abs" style="left:361.5px;top:618.25px;height:24px;line-height:24px;font-size:15.2px;color:#666;white-space:nowrap;">zzzxxx</span>
<div class="td" style="left:505.5px;top:599.05px;width:128.0px;"></div>
<span class="abs" style="left:522.7px;top:618.25px;height:24px;line-height:24px;font-size:15.2px;color:#666;white-space:nowrap;">华为</span>
<div class="td" style="left:633.5px;top:599.05px;width:238.0px;"></div>
<span class="abs" style="left:650.7px;top:618.25px;height:24px;line-height:24px;font-size:15.2px;color:#666;white-space:nowrap;">2024-12-19 23:40:54</span>
<div class="td" style="left:871.5px;top:599.05px;width:200.0px;"></div>
<span class="abs" style="left:888.7px;top:618.25px;height:24px;line-height:24px;font-size:15.2px;color:#666;white-space:nowrap;">36.137.37.3</span>
<div class="td" style="left:1071.5px;top:599.05px;width:200.0px;"></div>
<span class="abs" style="left:1088.7px;top:618.25px;height:24px;line-height:24px;font-size:15.2px;color:#666;white-space:nowrap;">36.137.37.3</span>
<div class="td" style="left:1271.5px;top:599.05px;width:128.0px;"></div>
<span class="abs" style="left:1288.7px;top:618.25px;height:24px;line-height:24px;font-size:15.2px;color:#666;white-space:nowrap;">39715</span>
<div class="td" style="left:1399.5px;top:599.05px;width:128.6px;"></div>
<span class="abs" style="left:1416.7px;top:618.25px;height:24px;line-height:24px;font-size:15.2px;color:#666;white-space:nowrap;">0</span>
<div class="td" style="left:1528.1px;top:599.05px;width:169.4px;"></div>
<div class="abs st" style="left:1544.5px;top:610.05px;background:#DB5060"></div>
<span class="abs" style="left:1564.5px;top:618.45px;height:24px;line-height:24px;font-size:15.2px;color:#fff;white-space:nowrap;">离线</span>
<div class="td" style="left:1697.5px;top:599.05px;width:138.0px;"></div>
<div class="abs sw" style="left:1714.3px;top:621.85px"></div>
<span class="abs" style="left:1725.7px;top:623.45px;height:24px;line-height:24px;font-size:13px;color:#fff;white-space:nowrap;">启用</span>
<div class="td" style="left:1835.5px;top:599.05px;width:264.5px;"></div>
<div class="abs xb" style="left:1851.0px;top:618.45px;width:57px;background:#5FB878"></div>
<span class="abs" style="left:1856.8px;top:622.05px;line-height:0;display:block"><svg class="ic" width="15.2" height="13.4" viewBox="0 0 15.400 13.600" ><path d="M9.600 1.800H2.600C1.700 1.800.9 2.500.9 3.400v7.600c0 .9.800 1.600 1.700 1.600h7.600c.9 0 1.600-.7 1.600-1.600V8.200" fill="none" stroke="#fff" stroke-width="1.500"/><path d="M5.300 9.500l.5-2.700L12.400.300l2.300 2.300L8.100 9z" fill="#fff"/></svg></span>
<span class="abs" style="left:1876.8px;top:618.05px;height:24px;line-height:24px;font-size:12.9px;color:#fff;white-space:nowrap;-webkit-text-stroke:0.2px #fff;">编辑</span>
<div class="abs xb" style="left:1922.0px;top:618.45px;width:53.600px;background:#DB5060"></div>
<span class="abs" style="left:1929.0px;top:622.8499999999999px;line-height:0;display:block"><svg class="ic" width="11.2" height="13.2" viewBox="0 0 10 13" ><g fill="none" stroke="#fff" stroke-width="1.500"><path d="M0 2.500h10M3.200 2.300V.800h3.600v1.500"/><path d="M1.300 3v8.200c0 .6.400 1 1 1h5.400c.6 0 1-.4 1-1V3"/><path d="M3.700 5v5M6.300 5v5" stroke-width="1.100"/></g></svg></span>
<span class="abs" style="left:1944.0px;top:618.05px;height:24px;line-height:24px;font-size:12.9px;color:#fff;white-space:nowrap;-webkit-text-stroke:0.2px #fff;">删除</span>
<div class="td" style="left:240.7px;top:661.50px;width:103.6px;border-left:1px solid #e2e2e2;"></div>
<span class="abs" style="left:257.9px;top:680.70px;height:24px;line-height:24px;font-size:15.2px;color:#666;white-space:nowrap;">10226</span>
<div class="td" style="left:344.3px;top:661.50px;width:161.2px;"></div>
<span class="abs" style="left:361.5px;top:680.70px;height:24px;line-height:24px;font-size:15.2px;color:#666;white-space:nowrap;">147258</span>
<div class="td" style="left:505.5px;top:661.50px;width:128.0px;"></div>
<span class="abs" style="left:522.7px;top:680.70px;height:24px;line-height:24px;font-size:15.2px;color:#666;white-space:nowrap;">iPhone</span>
<div class="td" style="left:633.5px;top:661.50px;width:238.0px;"></div>
<span class="abs" style="left:650.7px;top:680.70px;height:24px;line-height:24px;font-size:15.2px;color:#666;white-space:nowrap;">2024-12-19 21:15:21</span>
<div class="td" style="left:871.5px;top:661.50px;width:200.0px;"></div>
<span class="abs" style="left:888.7px;top:680.70px;height:24px;line-height:24px;font-size:15.2px;color:#666;white-space:nowrap;">42.49.81.107</span>
<div class="td" style="left:1071.5px;top:661.50px;width:200.0px;"></div>
<span class="abs" style="left:1088.7px;top:680.70px;height:24px;line-height:24px;font-size:15.2px;color:#666;white-space:nowrap;">42.49.81.107</span>
<div class="td" style="left:1271.5px;top:661.50px;width:128.0px;"></div>
<span class="abs" style="left:1288.7px;top:680.70px;height:24px;line-height:24px;font-size:15.2px;color:#666;white-space:nowrap;">0</span>
<div class="td" style="left:1399.5px;top:661.50px;width:128.6px;"></div>
<span class="abs" style="left:1416.7px;top:680.70px;height:24px;line-height:24px;font-size:15.2px;color:#666;white-space:nowrap;">0</span>
<div class="td" style="left:1528.1px;top:661.50px;width:169.4px;"></div>
<div class="abs st" style="left:1544.5px;top:672.50px;background:#DB5060"></div>
<span class="abs" style="left:1564.5px;top:680.90px;height:24px;line-height:24px;font-size:15.2px;color:#fff;white-space:nowrap;">离线</span>
<div class="td" style="left:1697.5px;top:661.50px;width:138.0px;"></div>
<div class="abs sw" style="left:1714.3px;top:684.30px"></div>
<span class="abs" style="left:1725.7px;top:685.90px;height:24px;line-height:24px;font-size:13px;color:#fff;white-space:nowrap;">启用</span>
<div class="td" style="left:1835.5px;top:661.50px;width:264.5px;"></div>
<div class="abs xb" style="left:1851.0px;top:680.90px;width:57px;background:#5FB878"></div>
<span class="abs" style="left:1856.8px;top:684.5px;line-height:0;display:block"><svg class="ic" width="15.2" height="13.4" viewBox="0 0 15.400 13.600" ><path d="M9.600 1.800H2.600C1.700 1.800.9 2.500.9 3.400v7.600c0 .9.800 1.600 1.700 1.600h7.600c.9 0 1.600-.7 1.600-1.600V8.200" fill="none" stroke="#fff" stroke-width="1.500"/><path d="M5.300 9.500l.5-2.700L12.400.300l2.300 2.300L8.100 9z" fill="#fff"/></svg></span>
<span class="abs" style="left:1876.8px;top:680.50px;height:24px;line-height:24px;font-size:12.9px;color:#fff;white-space:nowrap;-webkit-text-stroke:0.2px #fff;">编辑</span>
<div class="abs xb" style="left:1922.0px;top:680.90px;width:53.600px;background:#DB5060"></div>
<span class="abs" style="left:1929.0px;top:685.3px;line-height:0;display:block"><svg class="ic" width="11.2" height="13.2" viewBox="0 0 10 13" ><g fill="none" stroke="#fff" stroke-width="1.500"><path d="M0 2.500h10M3.200 2.300V.800h3.600v1.500"/><path d="M1.300 3v8.200c0 .6.400 1 1 1h5.400c.6 0 1-.4 1-1V3"/><path d="M3.700 5v5M6.300 5v5" stroke-width="1.100"/></g></svg></span>
<span class="abs" style="left:1944.0px;top:680.50px;height:24px;line-height:24px;font-size:12.9px;color:#fff;white-space:nowrap;-webkit-text-stroke:0.2px #fff;">删除</span>
<div class="td" style="left:240.7px;top:723.95px;width:103.6px;border-left:1px solid #e2e2e2;"></div>
<span class="abs" style="left:257.9px;top:743.15px;height:24px;line-height:24px;font-size:15.2px;color:#666;white-space:nowrap;">10225</span>
<div class="td" style="left:344.3px;top:723.95px;width:161.2px;"></div>
<span class="abs" style="left:361.5px;top:743.15px;height:24px;line-height:24px;font-size:15.2px;color:#666;white-space:nowrap;">1489904981</span>
<div class="td" style="left:505.5px;top:723.95px;width:128.0px;"></div>
<span class="abs" style="left:522.7px;top:743.15px;height:24px;line-height:24px;font-size:15.2px;color:#666;white-space:nowrap;">iPhone</span>
<div class="td" style="left:633.5px;top:723.95px;width:238.0px;"></div>
<span class="abs" style="left:650.7px;top:743.15px;height:24px;line-height:24px;font-size:15.2px;color:#666;white-space:nowrap;">2024-12-19 23:43:59</span>
<div class="td" style="left:871.5px;top:723.95px;width:200.0px;"></div>
<span class="abs" style="left:888.7px;top:743.15px;height:24px;line-height:24px;font-size:15.2px;color:#666;white-space:nowrap;">61.242.135.13</span>
<div class="td" style="left:1071.5px;top:723.95px;width:200.0px;"></div>
<span class="abs" style="left:1088.7px;top:743.15px;height:24px;line-height:24px;font-size:15.2px;color:#666;white-space:nowrap;">61.242.134.196</span>
<div class="td" style="left:1271.5px;top:723.95px;width:128.0px;"></div>
<span class="abs" style="left:1288.7px;top:743.15px;height:24px;line-height:24px;font-size:15.2px;color:#666;white-space:nowrap;">11</span>
<div class="td" style="left:1399.5px;top:723.95px;width:128.6px;"></div>
<span class="abs" style="left:1416.7px;top:743.15px;height:24px;line-height:24px;font-size:15.2px;color:#666;white-space:nowrap;">0</span>
<div class="td" style="left:1528.1px;top:723.95px;width:169.4px;"></div>
<div class="abs st" style="left:1544.5px;top:734.95px;background:#DB5060"></div>
<span class="abs" style="left:1564.5px;top:743.35px;height:24px;line-height:24px;font-size:15.2px;color:#fff;white-space:nowrap;">离线</span>
<div class="td" style="left:1697.5px;top:723.95px;width:138.0px;"></div>
<div class="abs sw" style="left:1714.3px;top:746.75px"></div>
<span class="abs" style="left:1725.7px;top:748.35px;height:24px;line-height:24px;font-size:13px;color:#fff;white-space:nowrap;">启用</span>
<div class="td" style="left:1835.5px;top:723.95px;width:264.5px;"></div>
<div class="abs xb" style="left:1851.0px;top:743.35px;width:57px;background:#5FB878"></div>
<span class="abs" style="left:1856.8px;top:746.95px;line-height:0;display:block"><svg class="ic" width="15.2" height="13.4" viewBox="0 0 15.400 13.600" ><path d="M9.600 1.800H2.600C1.700 1.800.9 2.500.9 3.400v7.600c0 .9.800 1.600 1.700 1.600h7.600c.9 0 1.600-.7 1.600-1.600V8.200" fill="none" stroke="#fff" stroke-width="1.500"/><path d="M5.300 9.500l.5-2.700L12.400.300l2.300 2.300L8.100 9z" fill="#fff"/></svg></span>
<span class="abs" style="left:1876.8px;top:742.95px;height:24px;line-height:24px;font-size:12.9px;color:#fff;white-space:nowrap;-webkit-text-stroke:0.2px #fff;">编辑</span>
<div class="abs xb" style="left:1922.0px;top:743.35px;width:53.600px;background:#DB5060"></div>
<span class="abs" style="left:1929.0px;top:747.75px;line-height:0;display:block"><svg class="ic" width="11.2" height="13.2" viewBox="0 0 10 13" ><g fill="none" stroke="#fff" stroke-width="1.500"><path d="M0 2.500h10M3.200 2.300V.800h3.600v1.500"/><path d="M1.300 3v8.200c0 .6.400 1 1 1h5.400c.6 0 1-.4 1-1V3"/><path d="M3.700 5v5M6.300 5v5" stroke-width="1.100"/></g></svg></span>
<span class="abs" style="left:1944.0px;top:742.95px;height:24px;line-height:24px;font-size:12.9px;color:#fff;white-space:nowrap;-webkit-text-stroke:0.2px #fff;">删除</span>
<div class="td" style="left:240.7px;top:786.40px;width:103.6px;border-left:1px solid #e2e2e2;"></div>
<span class="abs" style="left:257.9px;top:805.60px;height:24px;line-height:24px;font-size:15.2px;color:#666;white-space:nowrap;">10224</span>
<div class="td" style="left:344.3px;top:786.40px;width:161.2px;"></div>
<span class="abs" style="left:361.5px;top:805.60px;height:24px;line-height:24px;font-size:15.2px;color:#666;white-space:nowrap;">tuanzhang</span>
<div class="td" style="left:505.5px;top:786.40px;width:128.0px;"></div>
<span class="abs" style="left:522.7px;top:805.60px;height:24px;line-height:24px;font-size:15.2px;color:#666;white-space:nowrap;">其他手机</span>
<div class="td" style="left:633.5px;top:786.40px;width:238.0px;"></div>
<span class="abs" style="left:650.7px;top:805.60px;height:24px;line-height:24px;font-size:15.2px;color:#666;white-space:nowrap;">2024-12-19 20:41:48</span>
<div class="td" style="left:871.5px;top:786.40px;width:200.0px;"></div>
<span class="abs" style="left:888.7px;top:805.60px;height:24px;line-height:24px;font-size:15.2px;color:#666;white-space:nowrap;">120.225.140.238</span>
<div class="td" style="left:1071.5px;top:786.40px;width:200.0px;"></div>
<span class="abs" style="left:1088.7px;top:805.60px;height:24px;line-height:24px;font-size:15.2px;color:#666;white-space:nowrap;">120.225.140.238</span>
<div class="td" style="left:1271.5px;top:786.40px;width:128.0px;"></div>
<span class="abs" style="left:1288.7px;top:805.60px;height:24px;line-height:24px;font-size:15.2px;color:#666;white-space:nowrap;">0</span>
<div class="td" style="left:1399.5px;top:786.40px;width:128.6px;"></div>
<span class="abs" style="left:1416.7px;top:805.60px;height:24px;line-height:24px;font-size:15.2px;color:#666;white-space:nowrap;">0</span>
<div class="td" style="left:1528.1px;top:786.40px;width:169.4px;"></div>
<div class="abs st" style="left:1544.5px;top:797.40px;background:#FFB800"></div>
<span class="abs" style="left:1564.5px;top:805.80px;height:24px;line-height:24px;font-size:15.2px;color:#fff;white-space:nowrap;">在线</span>
<div class="td" style="left:1697.5px;top:786.40px;width:138.0px;"></div>
<div class="abs sw" style="left:1714.3px;top:809.20px"></div>
<span class="abs" style="left:1725.7px;top:810.80px;height:24px;line-height:24px;font-size:13px;color:#fff;white-space:nowrap;">启用</span>
<div class="td" style="left:1835.5px;top:786.40px;width:264.5px;"></div>
<div class="abs xb" style="left:1851.0px;top:805.80px;width:57px;background:#5FB878"></div>
<span class="abs" style="left:1856.8px;top:809.4000000000001px;line-height:0;display:block"><svg class="ic" width="15.2" height="13.4" viewBox="0 0 15.400 13.600" ><path d="M9.600 1.800H2.600C1.700 1.800.9 2.500.9 3.400v7.600c0 .9.800 1.600 1.700 1.600h7.600c.9 0 1.600-.7 1.600-1.600V8.200" fill="none" stroke="#fff" stroke-width="1.500"/><path d="M5.300 9.500l.5-2.700L12.400.300l2.300 2.300L8.100 9z" fill="#fff"/></svg></span>
<span class="abs" style="left:1876.8px;top:805.40px;height:24px;line-height:24px;font-size:12.9px;color:#fff;white-space:nowrap;-webkit-text-stroke:0.2px #fff;">编辑</span>
<div class="abs xb" style="left:1922.0px;top:805.80px;width:53.600px;background:#DB5060"></div>
<span class="abs" style="left:1929.0px;top:810.2px;line-height:0;display:block"><svg class="ic" width="11.2" height="13.2" viewBox="0 0 10 13" ><g fill="none" stroke="#fff" stroke-width="1.500"><path d="M0 2.500h10M3.200 2.300V.800h3.600v1.500"/><path d="M1.300 3v8.200c0 .6.400 1 1 1h5.400c.6 0 1-.4 1-1V3"/><path d="M3.700 5v5M6.300 5v5" stroke-width="1.100"/></g></svg></span>
<span class="abs" style="left:1944.0px;top:805.40px;height:24px;line-height:24px;font-size:12.9px;color:#fff;white-space:nowrap;-webkit-text-stroke:0.2px #fff;">删除</span>
<div class="td" style="left:240.7px;top:848.85px;width:103.6px;border-left:1px solid #e2e2e2;"></div>
<span class="abs" style="left:257.9px;top:868.05px;height:24px;line-height:24px;font-size:15.2px;color:#666;white-space:nowrap;">10223</span>
<div class="td" style="left:344.3px;top:848.85px;width:161.2px;"></div>
<span class="abs" style="left:361.5px;top:868.05px;height:24px;line-height:24px;font-size:15.2px;color:#666;white-space:nowrap;">330326645</span>
<div class="td" style="left:505.5px;top:848.85px;width:128.0px;"></div>
<span class="abs" style="left:522.7px;top:868.05px;height:24px;line-height:24px;font-size:15.2px;color:#666;white-space:nowrap;">iPhone</span>
<div class="td" style="left:633.5px;top:848.85px;width:238.0px;"></div>
<span class="abs" style="left:650.7px;top:868.05px;height:24px;line-height:24px;font-size:15.2px;color:#666;white-space:nowrap;">2024-12-19 20:35:48</span>
<div class="td" style="left:871.5px;top:848.85px;width:200.0px;"></div>
<span class="abs" style="left:888.7px;top:868.05px;height:24px;line-height:24px;font-size:15.2px;color:#666;white-space:nowrap;">60.255.77.76</span>
<div class="td" style="left:1071.5px;top:848.85px;width:200.0px;"></div>
<span class="abs" style="left:1088.7px;top:868.05px;height:24px;line-height:24px;font-size:15.2px;color:#666;white-space:nowrap;">60.255.77.76</span>
<div class="td" style="left:1271.5px;top:848.85px;width:128.0px;"></div>
<span class="abs" style="left:1288.7px;top:868.05px;height:24px;line-height:24px;font-size:15.2px;color:#666;white-space:nowrap;">7</span>
<div class="td" style="left:1399.5px;top:848.85px;width:128.6px;"></div>
<span class="abs" style="left:1416.7px;top:868.05px;height:24px;line-height:24px;font-size:15.2px;color:#666;white-space:nowrap;">0</span>
<div class="td" style="left:1528.1px;top:848.85px;width:169.4px;"></div>
<div class="abs st" style="left:1544.5px;top:859.85px;background:#DB5060"></div>
<span class="abs" style="left:1564.5px;top:868.25px;height:24px;line-height:24px;font-size:15.2px;color:#fff;white-space:nowrap;">离线</span>
<div class="td" style="left:1697.5px;top:848.85px;width:138.0px;"></div>
<div class="abs sw" style="left:1714.3px;top:871.65px"></div>
<span class="abs" style="left:1725.7px;top:873.25px;height:24px;line-height:24px;font-size:13px;color:#fff;white-space:nowrap;">启用</span>
<div class="td" style="left:1835.5px;top:848.85px;width:264.5px;"></div>
<div class="abs xb" style="left:1851.0px;top:868.25px;width:57px;background:#5FB878"></div>
<span class="abs" style="left:1856.8px;top:871.8500000000001px;line-height:0;display:block"><svg class="ic" width="15.2" height="13.4" viewBox="0 0 15.400 13.600" ><path d="M9.600 1.800H2.600C1.700 1.800.9 2.500.9 3.400v7.600c0 .9.800 1.600 1.700 1.600h7.600c.9 0 1.600-.7 1.600-1.600V8.200" fill="none" stroke="#fff" stroke-width="1.500"/><path d="M5.300 9.500l.5-2.700L12.400.300l2.300 2.300L8.100 9z" fill="#fff"/></svg></span>
<span class="abs" style="left:1876.8px;top:867.85px;height:24px;line-height:24px;font-size:12.9px;color:#fff;white-space:nowrap;-webkit-text-stroke:0.2px #fff;">编辑</span>
<div class="abs xb" style="left:1922.0px;top:868.25px;width:53.600px;background:#DB5060"></div>
<span class="abs" style="left:1929.0px;top:872.6500000000001px;line-height:0;display:block"><svg class="ic" width="11.2" height="13.2" viewBox="0 0 10 13" ><g fill="none" stroke="#fff" stroke-width="1.500"><path d="M0 2.500h10M3.200 2.300V.800h3.600v1.500"/><path d="M1.300 3v8.200c0 .6.400 1 1 1h5.400c.6 0 1-.4 1-1V3"/><path d="M3.700 5v5M6.300 5v5" stroke-width="1.100"/></g></svg></span>
<span class="abs" style="left:1944.0px;top:867.85px;height:24px;line-height:24px;font-size:12.9px;color:#fff;white-space:nowrap;-webkit-text-stroke:0.2px #fff;">删除</span>
<div class="pg" style="left:240.70px;color:#d2d2d2;">«</div>
<div class="pg" style="left:283.36px;background:#009688;border-color:#009688;color:#fff;font-weight:bold;">1</div>
<div class="pg" style="left:326.02px;">2</div>
<div class="pg" style="left:368.68px;">3</div>
<div class="pg" style="left:411.34px;">4</div>
<div class="pg" style="left:454.00px;">5</div>
<div class="pg" style="left:496.66px;">»</div>
</div></body></html>
